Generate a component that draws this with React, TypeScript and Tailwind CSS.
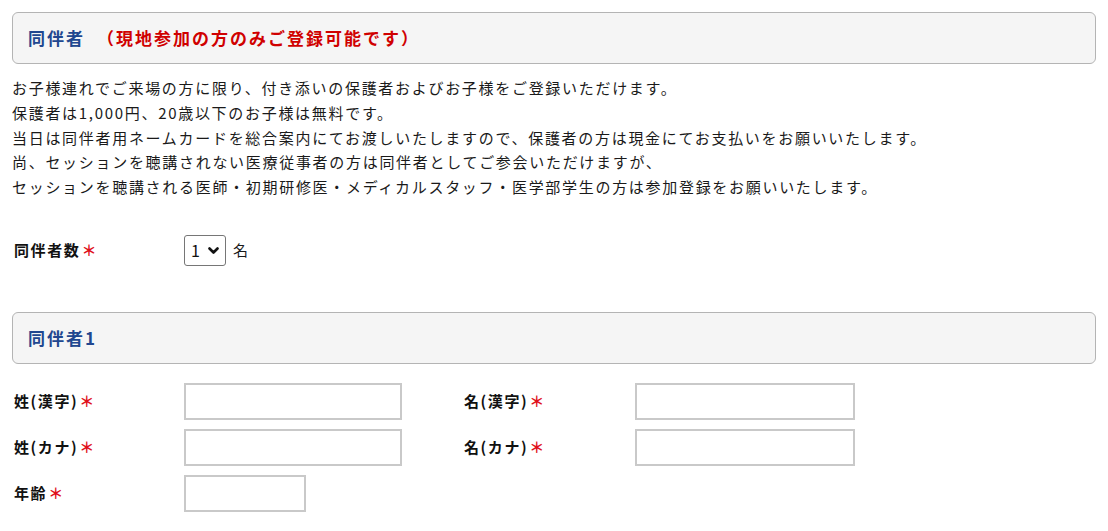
import { useState } from 'react';

const jp = { fontFamily: '"Noto Sans CJK JP", "Noto Sans", sans-serif' };

function SectionHeader({ children }: { children: React.ReactNode }) {
  return (
    <div className="flex h-[52px] items-center rounded-[6px] border-[1.5px] border-[#b4b4b4] bg-[#f5f5f5] pl-[15px]">
      <h2 className="text-[17px] font-bold tracking-[2px] text-[#21478f]">{children}</h2>
    </div>
  );
}

function Label({ text }: { text: string }) {
  return (
    <label className="flex items-center pl-[2px] text-[15px] font-bold tracking-[1.6px] text-[#111]">
      {text}
      <span className="ml-[1px] text-[15px] font-bold text-[#e0101a]">＊</span>
    </label>
  );
}

const inputCls = 'h-[37px] border-2 border-[#c9c9c9] bg-white px-2 text-[15px] outline-none';

export default function App() {
  const [count, setCount] = useState('1');

  return (
    <div className="min-h-[531px] bg-white px-3 pt-3 text-[#1a1a1a]" style={jp}>
      {/* 同伴者 */}
      <SectionHeader>
        同伴者
        <span className="ml-[12px] text-[#d00000]">（現地参加の方のみご登録可能です）</span>
      </SectionHeader>

      <div className="mt-[12px] text-[15px] leading-[24.75px] tracking-[1.7px]">
        <p>お子様連れでご来場の方に限り、付き添いの保護者およびお子様をご登録いただけます。</p>
        <p>保護者は1,000円、20歳以下のお子様は無料です。</p>
        <p>当日は同伴者用ネームカードを総合案内にてお渡しいたしますので、保護者の方は現金にてお支払いをお願いいたします。</p>
        <p>尚、セッションを聴講されない医療従事者の方は同伴者としてご参会いただけますが、</p>
        <p>セッションを聴講される医師・初期研修医・メディカルスタッフ・医学部学生の方は参加登録をお願いいたします。</p>
      </div>

      <div className="mt-[35px] flex items-center">
        <div className="w-[172px]">
          <Label text="同伴者数" />
        </div>
        <div className="relative">
          <select
            value={count}
            onChange={(e) => setCount(e.target.value)}
            className="h-[31px] w-[42px] appearance-none rounded-[3px] border border-[#767676] bg-white pl-[6px] text-[16px] text-[#111]"
            style={jp}
          >
            {[1, 2, 3, 4, 5].map((n) => (
              <option key={n} value={n}>
                {n}
              </option>
            ))}
          </select>
          <svg
            className="pointer-events-none absolute right-[7px] top-[12px]"
            width="11"
            height="8"
            viewBox="0 0 11 8"
          >
            <path d="M1.5 1.5 L5.5 5.5 L9.5 1.5" fill="none" stroke="#111" strokeWidth="2.6" strokeLinecap="round" strokeLinejoin="round" />
          </svg>
        </div>
        <span className="ml-[7px] text-[15px] tracking-[1.5px]">名</span>
      </div>

      {/* 同伴者1 */}
      <div className="mt-[46px]">
        <SectionHeader>同伴者1</SectionHeader>
      </div>

      <div className="mt-[19px] grid grid-cols-[172px_278px_173px_220px] gap-y-[9px]">
        <Label text="姓(漢字)" />
        <div>
          <input className={`${inputCls} w-[218px]`} />
        </div>
        <Label text="名(漢字)" />
        <input className={`${inputCls} w-[220px]`} />

        <Label text="姓(カナ)" />
        <div>
          <input className={`${inputCls} w-[218px]`} />
        </div>
        <Label text="名(カナ)" />
        <input className={`${inputCls} w-[220px]`} />

        <Label text="年齢" />
        <div>
          <input className={`${inputCls} w-[122px]`} />
        </div>
      </div>
    </div>
  );
}
